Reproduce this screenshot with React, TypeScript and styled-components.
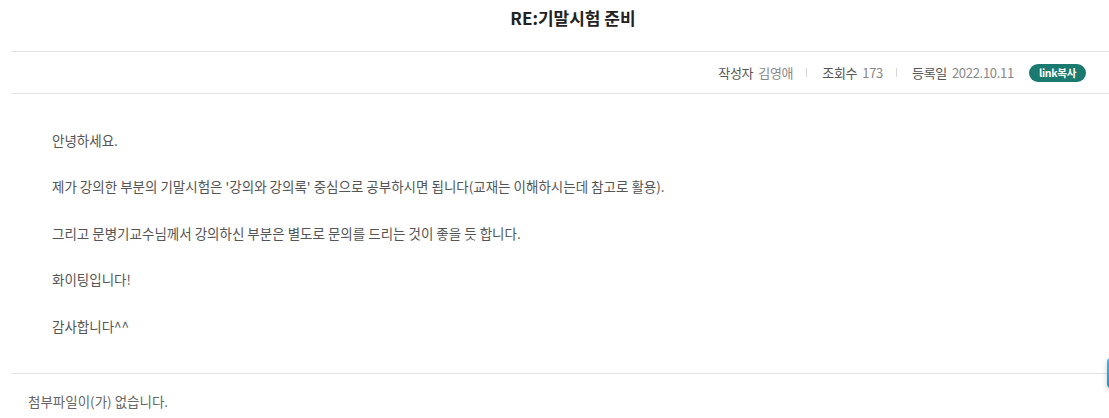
import React from 'react'
import styled, {createGlobalStyle} from 'styled-components'

const GlobalStyle = createGlobalStyle`
    html, body {
        margin: 0;
        padding: 0;
        background: #fff;
        overflow: hidden;
    }
    body {
        font-family: "Noto Sans CJK KR", "Noto Sans", sans-serif;
        color: #555;
    }
`

const Board = styled.div`
    margin-left: 12px;
    width: 1122px;
`

const Title = styled.h2`
    margin: 0;
    height: 52px;
    box-sizing: border-box;
    padding-top: 5px;
    text-align: center;
    font-size: 17px;
    font-weight: 700;
    color: #222;
    border-bottom: 1px solid #e3e3e3;
`

const MetaBar = styled.div`
    display: flex;
    align-items: center;
    justify-content: flex-end;
    height: 41px;
    padding-right: 48px;
    border-bottom: 1px solid #e3e3e3;
    font-size: 13px;
    letter-spacing: -0.3px;
`

const MetaItem = styled.span`
    display: flex;
    align-items: center;
    gap: 5px;
    color: #555;
`

const MetaValue = styled.span`
    color: #888;
`

const Divider = styled.span`
    width: 1px;
    height: 9px;
    background: #d6d6d6;
    margin: 0 15px 0 13px;
`

const LinkButton = styled.button`
    margin-left: 15px;
    height: 18px;
    padding: 0 10px;
    border: 0;
    border-radius: 9px;
    background: #1a7a70;
    color: #fff;
    font-family: inherit;
    font-size: 10.5px;
    font-weight: 700;
    letter-spacing: -0.3px;
    line-height: 18px;
    cursor: pointer;
`

const Content = styled.div`
    padding: 35px 0 12px 40px;
    border-bottom: 1px solid #e3e3e3;
    font-size: 13.5px;
    line-height: 23.2px;
    color: #555;
`

const Paragraph = styled.p`
    margin: 0 0 23.2px;
`

const Attach = styled.div`
    padding: 17px 0 0 16px;
    font-size: 13.5px;
    color: #666;
`

const QuickButton = styled.div`
    position: fixed;
    right: -26px;
    top: 358px;
    width: 28px;
    height: 30px;
    border-radius: 4px;
    background: linear-gradient(180deg, #3ab6ef, #1a94d6);
    box-shadow: 0 2px 6px rgba(0, 0, 0, 0.2);
`

const paragraphs = [
    '안녕하세요.',
    "제가 강의한 부분의 기말시험은 '강의와 강의록' 중심으로 공부하시면 됩니다(교재는 이해하시는데 참고로 활용).",
    '그리고 문병기교수님께서 강의하신 부분은 별도로 문의를 드리는 것이 좋을 듯 합니다.',
    '화이팅입니다!',
    '감사합니다^^',
]

export default function App() {
    return (
        <>
            <GlobalStyle />
            <Board>
                <Title>RE:기말시험 준비</Title>
                <MetaBar>
                    <MetaItem>
                        작성자 <MetaValue>김영애</MetaValue>
                    </MetaItem>
                    <Divider />
                    <MetaItem>
                        조회수 <MetaValue>173</MetaValue>
                    </MetaItem>
                    <Divider />
                    <MetaItem>
                        등록일 <MetaValue>2022.10.11</MetaValue>
                    </MetaItem>
                    <LinkButton>link복사</LinkButton>
                </MetaBar>
                <Content>
                    {paragraphs.map((text) => (
                        <Paragraph key={text}>{text}</Paragraph>
                    ))}
                </Content>
                <Attach>첨부파일이(가) 없습니다.</Attach>
            </Board>
            <QuickButton />
        </>
    )
}
